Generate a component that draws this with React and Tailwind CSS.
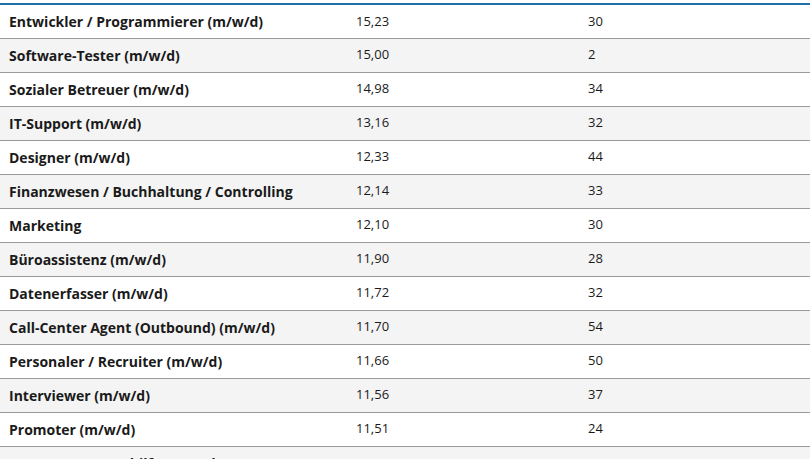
const rows = [
  ["Entwickler / Programmierer (m/w/d)", "15,23", "30"],
  ["Software-Tester (m/w/d)", "15,00", "2"],
  ["Sozialer Betreuer (m/w/d)", "14,98", "34"],
  ["IT-Support (m/w/d)", "13,16", "32"],
  ["Designer (m/w/d)", "12,33", "44"],
  ["Finanzwesen / Buchhaltung / Controlling", "12,14", "33"],
  ["Marketing", "12,10", "30"],
  ["Büroassistenz (m/w/d)", "11,90", "28"],
  ["Datenerfasser (m/w/d)", "11,72", "32"],
  ["Call-Center Agent (Outbound) (m/w/d)", "11,70", "54"],
  ["Personaler / Recruiter (m/w/d)", "11,66", "50"],
  ["Interviewer (m/w/d)", "11,56", "37"],
  ["Promoter (m/w/d)", "11,51", "24"],
  ["Messe / Eventaushilfe (m/w/d)", "", ""],
];

export default function App() {
  return (
    <div className="w-[812px] h-[459px] overflow-hidden bg-white pt-[3px] font-['Open_Sans',sans-serif] text-[#1a1a1a]">
      <table className="w-[810px] table-fixed border-collapse border-t-2 border-[#1f6fa8]">
        <colgroup>
          <col className="w-[356px]" />
          <col className="w-[232px]" />
          <col />
        </colgroup>
        <tbody>
          {rows.map((r, i) => (
            <tr
              key={i}
              className={`h-[34px] border-b border-[#9a9a9a] ${i % 2 === 1 ? "bg-[#f4f4f4]" : "bg-white"}`}
            >
              <td className="pl-[9px] text-[14px] font-bold">{r[0]}</td>
              <td className="text-[13px]">{r[1]}</td>
              <td className="text-[13px]">{r[2]}</td>
            </tr>
          ))}
        </tbody>
      </table>
    </div>
  );
}
